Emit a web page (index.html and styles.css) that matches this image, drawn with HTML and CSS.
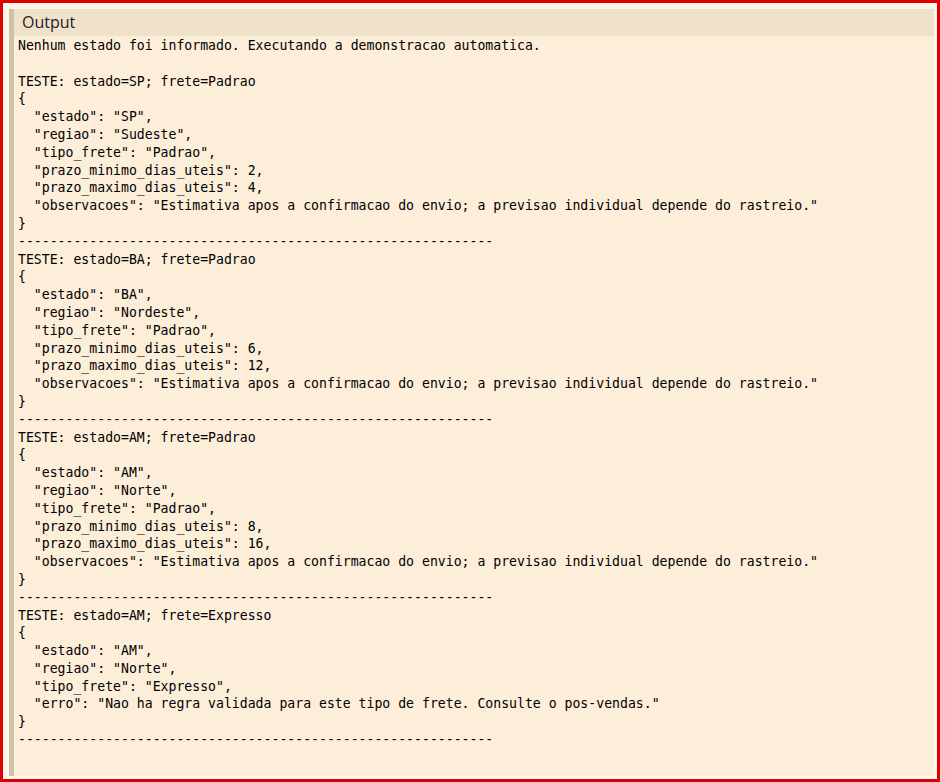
FILE: index.html
```html
<!DOCTYPE html>
<html>
<head>
<meta charset="utf-8">
<link rel="stylesheet" href="styles.css">
</head>
<body>
<div class="frame">
  <div class="panel">
    <div class="header">Output</div>
<pre class="out">Nenhum estado foi informado. Executando a demonstracao automatica.

TESTE: estado=SP; frete=Padrao
{
  "estado": "SP",
  "regiao": "Sudeste",
  "tipo_frete": "Padrao",
  "prazo_minimo_dias_uteis": 2,
  "prazo_maximo_dias_uteis": 4,
  "observacoes": "Estimativa apos a confirmacao do envio; a previsao individual depende do rastreio."
}
------------------------------------------------------------
TESTE: estado=BA; frete=Padrao
{
  "estado": "BA",
  "regiao": "Nordeste",
  "tipo_frete": "Padrao",
  "prazo_minimo_dias_uteis": 6,
  "prazo_maximo_dias_uteis": 12,
  "observacoes": "Estimativa apos a confirmacao do envio; a previsao individual depende do rastreio."
}
------------------------------------------------------------
TESTE: estado=AM; frete=Padrao
{
  "estado": "AM",
  "regiao": "Norte",
  "tipo_frete": "Padrao",
  "prazo_minimo_dias_uteis": 8,
  "prazo_maximo_dias_uteis": 16,
  "observacoes": "Estimativa apos a confirmacao do envio; a previsao individual depende do rastreio."
}
------------------------------------------------------------
TESTE: estado=AM; frete=Expresso
{
  "estado": "AM",
  "regiao": "Norte",
  "tipo_frete": "Expresso",
  "erro": "Nao ha regra validada para este tipo de frete. Consulte o pos-vendas."
}
------------------------------------------------------------</pre>
  </div>
</div>
</body>
</html>
```
FILE: styles.css
```css
html, body {
  margin: 0;
  padding: 0;
}
body {
  width: 940px;
  height: 782px;
  overflow: hidden;
}
.frame {
  box-sizing: border-box;
  width: 940px;
  height: 782px;
  border: 3px solid #dd0000;
  background: #fdf6ea;
  padding: 6px 3px 3px 6px;
  display: flex;
}
.panel {
  flex: 1;
  display: flex;
  flex-direction: column;
  background: #fdeeda;
  border-left: 5px solid #cfc1aa;
}
.header {
  height: 27px;
  background: #f0e1cb;
  font-family: "Open Sans", "Noto Sans", sans-serif;
  font-size: 16px;
  line-height: 27px;
  color: #222;
  padding-left: 8px;
}
.out {
  margin: 0;
  padding: 1px 0 0 4px;
  font-family: "DejaVu Sans Mono", monospace;
  font-size: 13.17px;
  line-height: 17.8px;
  color: #000;
  white-space: pre;
}
```
